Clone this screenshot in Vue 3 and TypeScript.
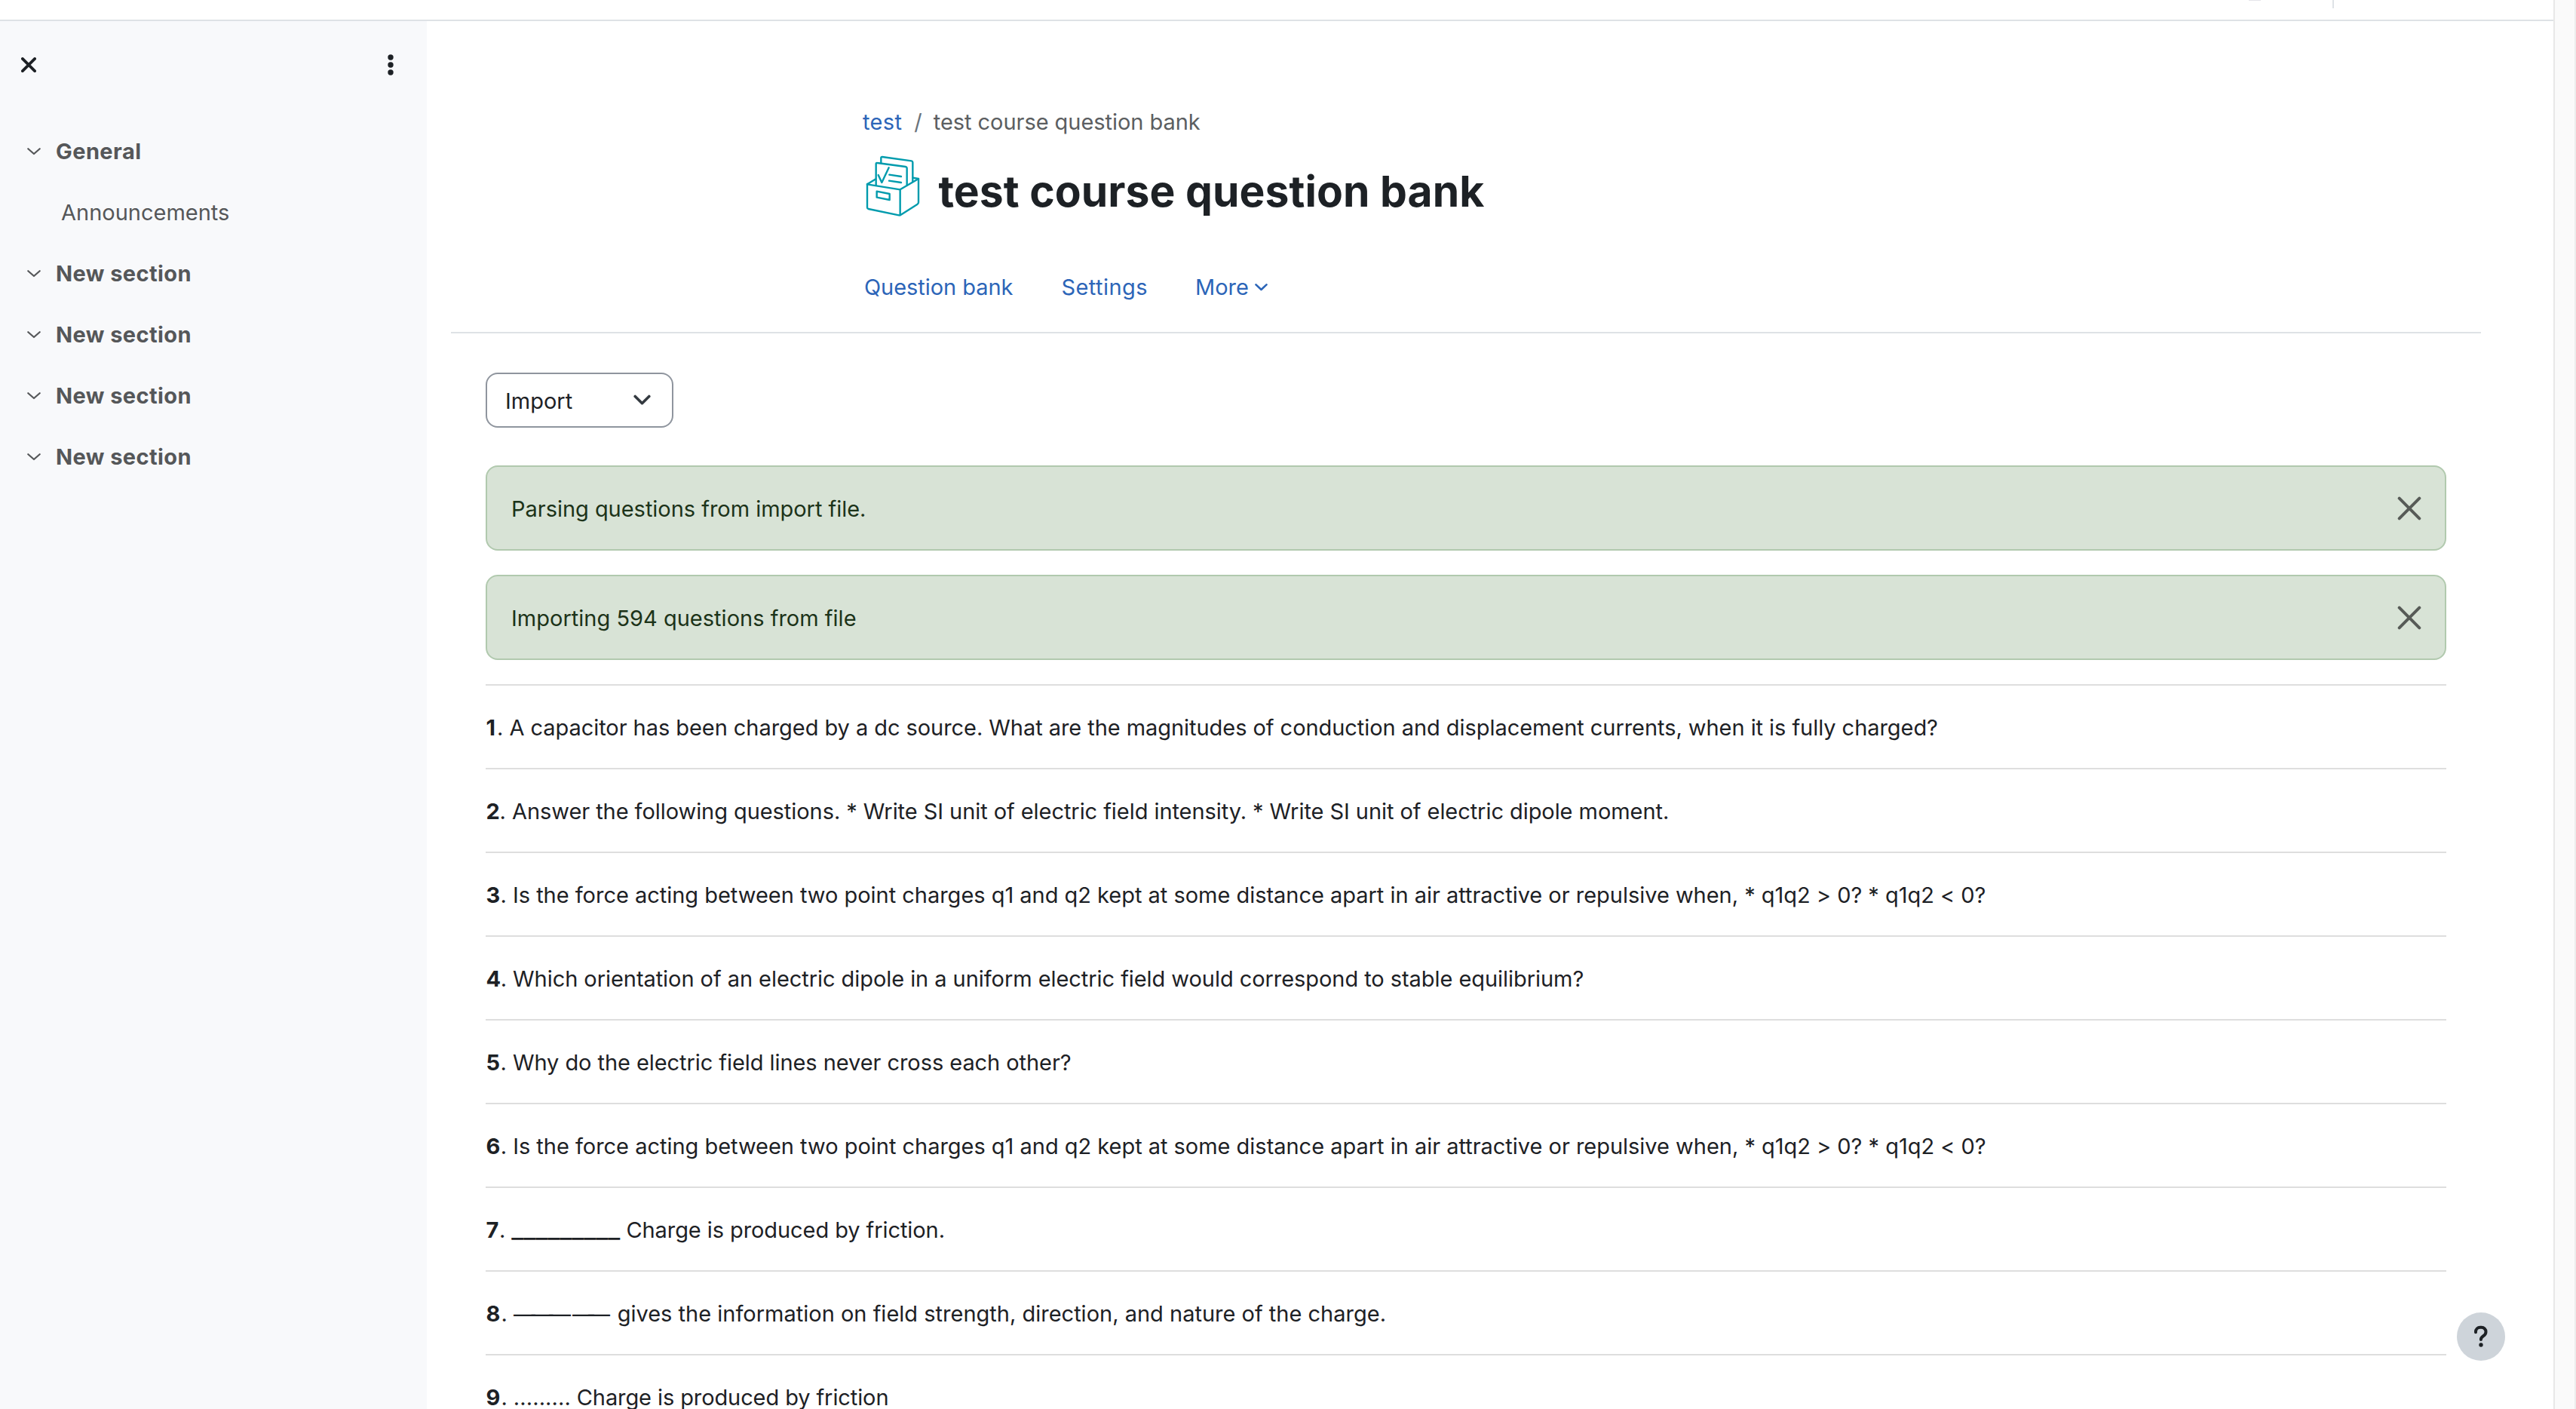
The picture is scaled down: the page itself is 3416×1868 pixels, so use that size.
<script setup lang="ts">
interface CourseSection {
  name: string
  activities: string[]
}

interface Question {
  text: string
  spacing: number
  blanks?: { kind: string; chars: string }[]
}

const sections: CourseSection[] = [
  { name: 'General', activities: ['Announcements'] },
  { name: 'New section', activities: [] },
  { name: 'New section', activities: [] },
  { name: 'New section', activities: [] },
  { name: 'New section', activities: [] },
]

const notices = [
  { text: 'Parsing questions from import file.', spacing: -0.03 },
  { text: 'Importing 594 questions from file', spacing: 0.01 },
]

const questions: Question[] = [
  { text: 'A capacitor has been charged by a dc source. What are the magnitudes of conduction and displacement currents, when it is fully charged?', spacing: -0.057 },
  { text: 'Answer the following questions. * Write SI unit of electric field intensity. * Write SI unit of electric dipole moment.', spacing: -0.064 },
  { text: 'Is the force acting between two point charges q1 and q2 kept at some distance apart in air attractive or repulsive when, * q1q2 > 0? * q1q2 < 0?', spacing: -0.024 },
  { text: 'Which orientation of an electric dipole in a uniform electric field would correspond to stable equilibrium?', spacing: -0.059 },
  { text: 'Why do the electric field lines never cross each other?', spacing: -0.066 },
  { text: 'Is the force acting between two point charges q1 and q2 kept at some distance apart in air attractive or repulsive when, * q1q2 > 0? * q1q2 < 0?', spacing: -0.024 },
  { text: 'Charge is produced by friction.', spacing: -0.08, blanks: [{ kind: 'underline', chars: '_________' }] },
  {
    text: 'gives the information on field strength, direction, and nature of the charge.',
    spacing: 0,
    blanks: [
      { kind: 'dash-long', chars: '———' },
      { kind: 'dash-short', chars: '——' },
    ],
  },
  { text: 'Charge is produced by friction', spacing: -0.1, blanks: [{ kind: 'dots', chars: '.........' }] },
]

const numberWidths = [15, 18.6, 19.5, 19.7, 19.5, 19.7, 18, 20.5, 20.5]
</script>

<template>
  <div class="window">
    <div class="page">
      <header class="navbar">
        <span class="navbar-badge"></span>
        <span class="navbar-divider"></span>
      </header>

      <div class="body">
        <aside class="drawer">
          <div class="drawer-header">
            <svg class="drawer-close" width="20" height="20" viewBox="0 0 20 20">
              <path d="M1.9 1.9 18.1 18.1M18.1 1.9 1.9 18.1" />
            </svg>
            <svg class="drawer-menu" width="8" height="28" viewBox="0 0 8 28">
              <circle cx="4" cy="4" r="3.7" />
              <circle cx="4" cy="14" r="3.7" />
              <circle cx="4" cy="24" r="3.7" />
            </svg>
          </div>
          <nav class="index">
            <template v-for="(section, i) in sections" :key="i">
              <div class="index-row section">
                <svg class="chevron" width="18" height="10" viewBox="0 0 18 10">
                  <path d="M1.3 1.2 9 8 16.7 1.2" />
                </svg>
                <span>{{ section.name }}</span>
              </div>
              <div v-for="activity in section.activities" :key="activity" class="index-row activity">
                {{ activity }}
              </div>
            </template>
          </nav>
        </aside>

        <main class="main">
          <div class="page-header">
            <div class="breadcrumb">
              <a class="crumb-link">test</a>
              <span class="crumb-slash">/</span>
              <span class="crumb-current">test course question bank</span>
            </div>
            <div class="title-row">
              <svg class="bank-icon" width="74" height="81.333" viewBox="48 48 222 244">
                <path d="M60 162V256Q60 260 65 261L186 286Q190 287 194 284L260 242Q264 239 264 235V141L242 137" />
                <path d="M60 163 191 184 264 141M191 184V286M61 162 92 143" />
                <path d="M95 166V82Q95 77 100 78L212 93Q218 94 218 100V166" />
                <path d="M115 77V58Q115 54 120 54L236 70Q241 71 241 76V152" />
                <path d="M104 126 118 156 146 97" />
                <path d="M148 125 195 132M147 149 195 156" />
                <path d="M98 191 149 201V225L98 215Z" />
              </svg>
              <h1>test course question bank</h1>
            </div>
            <nav class="tabs">
              <a class="tab bank">Question bank</a>
              <a class="tab settings">Settings</a>
              <a class="tab">
                More
                <svg class="tab-chevron" width="17" height="10" viewBox="0 0 17 10">
                  <path d="M1.5 1.4 8.5 8 15.5 1.4" />
                </svg>
              </a>
            </nav>
          </div>

          <div class="content">
            <div class="select">
              <span>Import</span>
              <svg width="23" height="15" viewBox="0 0 23 15">
                <path d="M2.2 2.4 11.5 11.7 20.8 2.4" />
              </svg>
            </div>

            <div v-for="notice in notices" :key="notice.text" class="alert">
              <span :style="{ letterSpacing: notice.spacing + 'px' }">{{ notice.text }}</span>
              <svg width="32" height="32" viewBox="0 0 32 32">
                <path d="M2.7 2.7 29.3 29.3M29.3 2.7 2.7 29.3" />
              </svg>
            </div>

            <div class="questions">
              <div v-for="(question, i) in questions" :key="i" class="question">
                <b :style="{ width: numberWidths[i] + 'px' }">{{ i + 1 }}</b>
                <span class="question-text" :style="{ letterSpacing: question.spacing + 'px' }">. <template v-if="question.blanks"><span v-for="blank in question.blanks" :key="blank.kind" :class="blank.kind">{{ blank.chars }}</span>&nbsp;</template>{{ question.text }}</span>
              </div>
            </div>
          </div>
        </main>
      </div>

      <button class="help" aria-label="Help">
        <svg width="20" height="30" viewBox="0 0 20 30">
          <path d="M3 9.3V8.6A5.9 5.9 0 0 1 8.9 2.8H10.6A5.9 5.9 0 0 1 16.5 8.7C16.5 11.6 15 12.9 13 14.2 11 15.5 9.9 16.7 9.9 19" />
          <circle cx="10" cy="26" r="2.7" />
        </svg>
      </button>
    </div>
    <div class="scrollbar"></div>
  </div>
</template>

<style>
body {
  margin: 0;
  background: #fff;
  overflow: hidden;
}
</style>

<style scoped>
.window {
  display: flex;
  width: 3416px;
  height: 1868px;
  overflow: hidden;
  background: #fff;
  color: #1d2125;
  font-family: Inter, 'Liberation Sans', sans-serif;
  font-size: 29px;
}

svg {
  display: block;
  flex: none;
  fill: none;
  stroke: currentColor;
  stroke-linecap: round;
  stroke-linejoin: round;
}

.page {
  position: relative;
  display: flex;
  flex-direction: column;
  width: 3386px;
  height: 1868px;
  overflow: hidden;
}

.scrollbar {
  box-sizing: border-box;
  width: 30px;
  height: 1868px;
  border-left: 2px solid #e8e8e8;
  border-right: 2px solid #ededed;
  background: #fafafa;
}

.navbar {
  display: flex;
  flex: none;
  align-items: flex-start;
  height: 26px;
  border-bottom: 2px solid #dee2e6;
}

.navbar-badge {
  width: 16px;
  height: 1px;
  margin-left: 2982px;
  background: #e4e5ea;
}

.navbar-divider {
  width: 2px;
  height: 11px;
  margin-left: 95px;
  background: #dee2e6;
}

.body {
  display: flex;
  flex: 1;
  min-height: 0;
}

.drawer {
  width: 566px;
  flex: none;
  background: #f8f9fb;
}

.drawer-header {
  display: flex;
  align-items: center;
  justify-content: space-between;
  height: 116px;
  padding: 0 44px 0 28px;
}

.drawer-close {
  stroke-width: 3.8;
}

.drawer-menu {
  fill: #1d2125;
  stroke: none;
}

.index {
  padding-top: 16px;
  color: #555759;
}

.index-row {
  display: flex;
  align-items: center;
  height: 81px;
}

.section {
  gap: 20px;
  padding-left: 36px;
  font-weight: 700;
  letter-spacing: 0.42px;
}

.activity {
  padding-left: 81px;
}

.chevron {
  stroke-width: 2.2;
}

.main {
  flex: 1;
  min-width: 0;
  overflow: hidden;
}

.page-header {
  margin: 0 96px 0 32px;
  padding: 112px 0 0 546px;
  border-bottom: 2px solid #dee2e6;
}

.breadcrumb {
  display: flex;
  height: 43px;
  line-height: 43px;
}

.crumb-link {
  color: #2c65b8;
  letter-spacing: 0.35px;
}

.crumb-slash {
  margin: 0 15px 0 16px;
  color: #6a737b;
}

.crumb-current {
  color: #5b5e61;
  letter-spacing: -0.05px;
}

.title-row {
  display: flex;
  height: 143px;
}

.bank-icon {
  margin: 23px 24.5px 0 2px;
  color: #009bad;
  stroke-width: 7.2;
}

h1 {
  margin: 0;
  font-size: 57px;
  font-weight: 700;
  line-height: 142px;
  letter-spacing: 0.04px;
}

.tabs {
  display: flex;
  height: 109px;
  padding: 0 0 5px 2px;
  line-height: 109px;
}

.tab {
  display: flex;
  align-items: center;
  color: #2c65b8;
}

.tab.bank {
  width: 261.5px;
  letter-spacing: -0.06px;
}

.tab.settings {
  width: 177.5px;
  letter-spacing: 0.42px;
}

.tab-chevron {
  margin-left: 8.5px;
  stroke-width: 2.6;
}

.content {
  display: flex;
  flex-direction: column;
  padding: 52px 142px 0 78px;
}

.select {
  box-sizing: border-box;
  display: flex;
  align-items: center;
  justify-content: space-between;
  width: 249px;
  height: 73px;
  margin-bottom: 50px;
  padding: 0 28px 0 24px;
  border: 2px solid #8f959e;
  border-radius: 16px;
}

.select span {
  padding-top: 2px;
}

.select svg {
  stroke-width: 3.6;
  color: #343a40;
}

.alert {
  box-sizing: border-box;
  display: flex;
  align-items: center;
  justify-content: space-between;
  height: 113px;
  margin-bottom: 32px;
  padding: 0 31px 0 32px;
  border: 2px solid #b1c9ae;
  border-radius: 16px;
  background: #d8e3d6;
  color: #1c3319;
}

.alert span {
  padding-top: 2px;
}

.alert svg {
  color: #575b57;
  stroke-width: 4;
}

.question {
  box-sizing: border-box;
  display: flex;
  height: 111px;
  padding-top: 1px;
  border-top: 2px solid #dedede;
  line-height: 109px;
  white-space: nowrap;
}

.question b {
  flex: none;
  text-indent: 0.5px;
}

.question-text {
  height: 109px;
}

.underline {
  font-size: 35.1px;
  line-height: 0;
  letter-spacing: 0;
}

.dash-long,
.dash-short {
  line-height: 0;
  vertical-align: -1px;
}

.dash-long {
  letter-spacing: -5.5px;
}

.dash-short {
  margin: 0 9.5px 0 7.5px;
  letter-spacing: -8px;
}

.dots {
  margin-right: -0.2px;
  letter-spacing: 0.1px;
}

.help {
  position: absolute;
  right: 64px;
  bottom: 64px;
  display: flex;
  align-items: center;
  justify-content: center;
  width: 64px;
  height: 64px;
  padding: 0;
  border: 0;
  border-radius: 50%;
  background: #ced4da;
  color: #1d2125;
}

.help svg {
  stroke-width: 4;
}

.help circle {
  fill: currentColor;
  stroke: none;
}
</style>
